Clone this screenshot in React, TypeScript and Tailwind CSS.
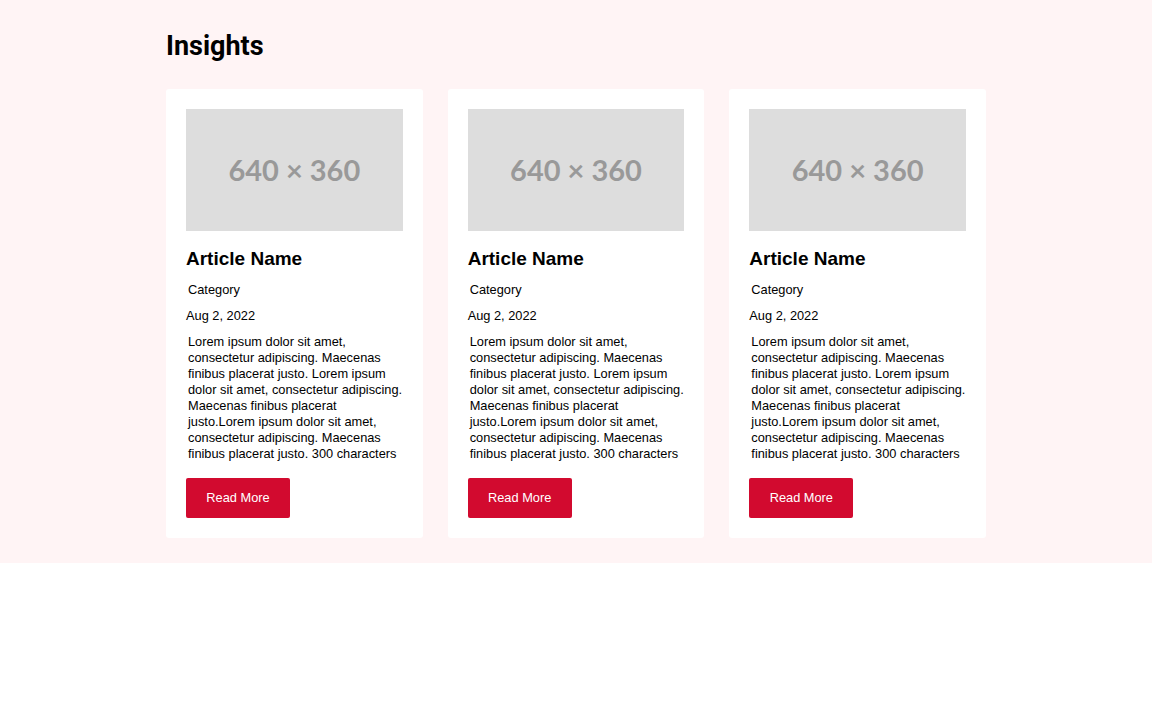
const articles = [1, 2, 3].map((id) => ({
  id,
  title: "Article Name",
  category: "Category",
  date: "Aug 2, 2022",
  body: "Lorem ipsum dolor sit amet, consectetur adipiscing. Maecenas finibus placerat justo. Lorem ipsum dolor sit amet, consectetur adipiscing. Maecenas finibus placerat justo.Lorem ipsum dolor sit amet, consectetur adipiscing. Maecenas finibus placerat justo. 300 characters",
}));

const ArticleCard = ({ article }: { article: (typeof articles)[number] }) => (
  <div className="bg-white rounded-[3px] px-5 pt-5 pb-5 flex flex-col">
    {/* Placeholder image */}
    <div className="h-[122px] bg-[#dddddd] flex items-center justify-center">
      <span className="font-['Lato'] font-bold text-[29px] leading-none pb-[2px] text-[#999999]">
        640 × 360
      </span>
    </div>
    <h3 className="mt-[17px] text-[19px] leading-[22px] font-bold text-black">
      {article.title}
    </h3>
    <p className="mt-3 pl-[2px] text-[12.8px] leading-4 text-black">
      {article.category}
    </p>
    <p className="mt-[10px] text-[12.8px] leading-4 text-black">
      {article.date}
    </p>
    <p className="mt-[10px] pl-[2px] text-[12.8px] leading-4 text-black">
      {article.body}
    </p>
    <button className="mt-4 w-[104px] h-10 bg-[#d20a2f] rounded-[2px] text-white text-[12.8px]">
      Read More
    </button>
  </div>
);

export default function App() {
  return (
    <div className="min-h-[720px] bg-white font-['Liberation_Sans',Arial,sans-serif]">
      <section className="bg-[#fff4f5] pt-[29px] pb-[25px]">
        <div className="w-[820px] mx-auto">
          <h2 className="font-['Roboto',sans-serif] text-[27px] leading-[34px] font-bold text-black mb-[26px]">
            Insights
          </h2>
          <div className="grid grid-cols-3 gap-[25px]">
            {articles.map((a) => (
              <ArticleCard key={a.id} article={a} />
            ))}
          </div>
        </div>
      </section>
    </div>
  );
}
